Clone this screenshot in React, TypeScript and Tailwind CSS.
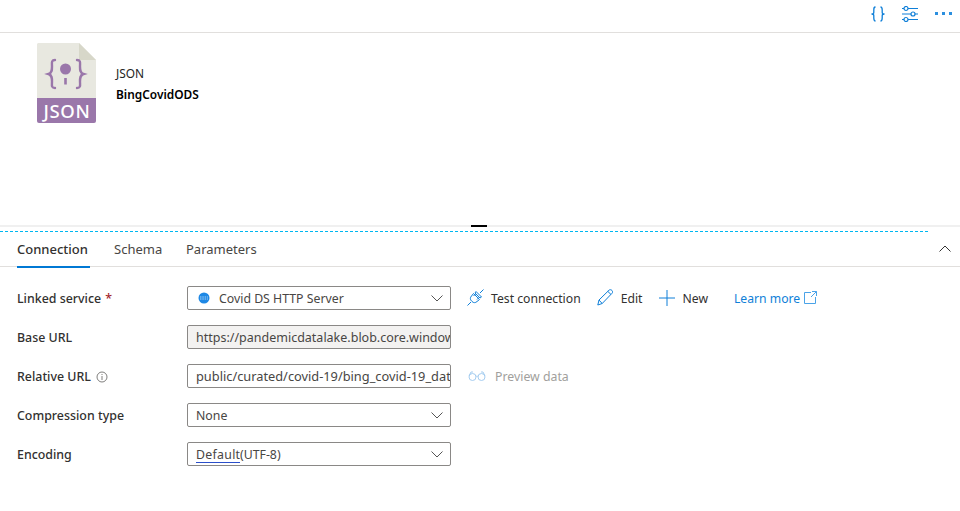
import React from "react";

const Chevron = () => (
  <svg width="12" height="7" viewBox="0 0 12 7" className="absolute right-[7px] top-[8px]" fill="none" stroke="#555" strokeWidth="1">
    <path d="M0.5 0.5 L6 6 L11.5 0.5" />
  </svg>
);

const Select = ({ children }: { children: React.ReactNode }) => (
  <div className="relative w-[264px] h-[24px] border border-[#8a8886] rounded-[2px] pl-[8px] pt-[2px] flex items-center text-[12.3px] text-[#484644] bg-white">
    {children}
    <Chevron />
  </div>
);

const Row = ({ label, children }: { label: React.ReactNode; children: React.ReactNode }) => (
  <div className="flex items-center h-[24px] mb-[15px]">
    <div className="w-[170px] pt-[2px] text-[12.4px] font-medium text-[#323130] flex items-center">{label}</div>
    {children}
  </div>
);

const TextBox = ({ value, disabled, size }: { value: string; disabled?: boolean; size: string }) => (
  <div className={`w-[264px] h-[24px] border border-[#8a8886] rounded-[2px] pl-[8px] pt-[2px] flex items-center text-[#484644] overflow-hidden whitespace-nowrap ${size} ${disabled ? "bg-[#f3f2f1]" : "bg-white"}`}>
    {value}
  </div>
);

export default function App() {
  return (
    <div className="w-[960px] h-[511px] bg-white overflow-hidden font-['Noto_Sans','Open_Sans',sans-serif]">
      {/* top toolbar */}
      <div className="h-[33px] border-b border-[#e1dfdd] flex items-center justify-end pb-[5px] pr-[8px]">
        <svg width="16" height="16" viewBox="0 0 16 16" fill="none" stroke="#0f7fd8" strokeWidth="1.3" className="mr-[15px]">
          <path d="M5.5 1 C3.8 1 3.8 2 3.8 4 V6.5 C3.8 7.5 2.8 8 1.5 8 C2.8 8 3.8 8.5 3.8 9.5 V12 C3.8 14 3.8 15 5.5 15" />
          <path d="M10.5 1 C12.2 1 12.2 2 12.2 4 V6.5 C12.2 7.5 13.2 8 14.5 8 C13.2 8 12.2 8.5 12.2 9.5 V12 C12.2 14 12.2 15 10.5 15" />
        </svg>
        <svg width="17" height="16" viewBox="0 0 17 16" fill="none" stroke="#0f7fd8" strokeWidth="1.2" className="mr-[17px]">
          <path d="M1 2.5 H3 M7 2.5 H17 M1 8 H10 M14 8 H17 M1 13.5 H3 M7 13.5 H17" />
          <circle cx="5" cy="2.5" r="2" />
          <circle cx="12" cy="8" r="2" />
          <circle cx="5" cy="13.5" r="2" />
        </svg>
        <div className="flex gap-[4px] items-center">
          <span className="w-[3px] h-[3px] bg-[#2b8fdf]" />
          <span className="w-[3px] h-[3px] bg-[#2b8fdf]" />
          <span className="w-[3px] h-[3px] bg-[#2b8fdf]" />
        </div>
      </div>

      {/* file panel */}
      <div className="h-[192px] flex items-start pl-[37px] pt-[10px]">
        <svg width="59" height="80" viewBox="0 0 59 80" className="block">
          <path d="M1 0 H42 L59 17 V58 H0 V1 Z" fill="#e8e8e0" />
          <path d="M42 0 L59 17 H42 Z" fill="#d7d7c9" />
          <path d="M0 55 H59 V78 Q59 80 57 80 H2 Q0 80 0 78 Z" fill="#9a77aa" />
          <g fill="none" stroke="#9a77aa" strokeWidth="2.4" strokeLinecap="round">
            <path d="M18 17 C14 17 15 20 15 23.5 C15 27 15 30 11.5 31 C15 32 15 35 15 38.5 C15 42 14 45 18 45" />
            <path d="M40 17 C44 17 43 20 43 23.5 C43 27 43 30 46.5 31 C43 32 43 35 43 38.5 C43 42 44 45 40 45" />
          </g>
          <circle cx="28.5" cy="26" r="5.5" fill="#9a77aa" />
          <rect x="27.2" y="35" width="2.6" height="6.5" fill="#9a77aa" />
          <text x="30" y="75" textAnchor="middle" fill="#fff" fontSize="18.5" fontWeight="500" letterSpacing="0.6" fontFamily="'Noto Sans',sans-serif">JSON</text>
        </svg>
        <div className="ml-[20px] pt-[20px] text-[11.9px] leading-[20px]">
          <div className="text-[#252423]">JSON</div>
          <div className="font-semibold text-black pt-[1px]">BingCovidODS</div>
        </div>
      </div>

      {/* splitter */}
      <div className="relative h-[2px] bg-[#f0f0f0]">
        <div className="absolute left-[471px] top-0 w-[16px] h-[2px] bg-black" />
      </div>
      <div className="h-[4px]" />
      <div className="h-0 w-[928px] border-t border-dashed border-[#00b7f0]" />

      {/* tabs */}
      <div className="relative h-[35px] border-b border-[#e1dfdd] flex pl-[17px] gap-[24px] text-[13px]">
        <div className="relative w-[73px] whitespace-nowrap h-[35px] flex items-center text-[#323130] font-medium">
          Connection
          <div className="absolute left-0 right-0 bottom-[-1px] h-[2px] bg-[#0078d4]" />
        </div>
        <div className="w-[48px] h-[35px] flex items-center text-[#484644]">Schema</div>
        <div className="h-[35px] flex items-center text-[#484644]">Parameters</div>
        <svg width="12" height="7" viewBox="0 0 12 7" fill="none" stroke="#333" strokeWidth="1" className="absolute right-[9px] top-[13px]">
          <path d="M0.5 6.5 L6 1 L11.5 6.5" />
        </svg>
      </div>

      {/* form */}
      <div className="pl-[17px] pt-[19px]">
        <Row label={<>Linked service <span className="text-[#a4262c] ml-[4px]">*</span></>}>
          <Select>
            <svg width="12" height="12" viewBox="0 0 12 12" className="mr-[9px] ml-[2px] mb-[2px]">
              <circle cx="6" cy="6" r="5.5" fill="#1e88e5" />
              <path d="M2 5 H10 M2 7 H10" stroke="#cfe6fa" strokeWidth="0.8" strokeDasharray="1.5 0.8" />
            </svg>
            Covid DS HTTP Server
          </Select>
          <div className="flex items-center text-[12.2px] text-[#323130] ml-[16px]">
            <svg width="17" height="17" viewBox="0 0 17 17" fill="none" stroke="#0f7fd8" strokeWidth="1" className="mr-[7px]">
              <path d="M0.5 16.5 L4 13 M16.5 0.5 L13 4 M8.5 5 L6.5 7 M12 8.5 L10 10.5" />
              <path d="M6.5 4.5 L12.5 10.5 L10 12.5 C8.5 14 6.5 14 5 12.5 L4.5 12 C3 10.5 3 8.5 4.5 7 Z" />
              <path d="M9 2.5 L14.5 8 L13 9 L8 4 Z" />
            </svg>
            <span className="pt-[2px]">Test connection</span>
            <svg width="16" height="17" viewBox="0 0 16 17" fill="none" stroke="#0f7fd8" strokeWidth="1" className="ml-[16px] mr-[8px]">
              <path d="M0.8 16 L2 11 L12 1.2 C12.8 0.5 14 0.5 15 1.5 C15.8 2.4 15.8 3.5 15 4.3 L5.2 14.5 Z M2 11 L5.2 14.5 M10.8 2.4 L14 5.5" />
            </svg>
            <span className="pt-[2px]">Edit</span>
            <svg width="16" height="16" viewBox="0 0 16 16" fill="none" stroke="#0f7fd8" strokeWidth="1" className="ml-[16px] mr-[8px]">
              <path d="M0 8 H16 M8 0 V16" />
            </svg>
            <span className="pt-[2px]">New</span>
            <span className="ml-[26px] pt-[2px] text-[#0f7fd8]">Learn more</span>
            <svg width="13" height="13" viewBox="0 0 13 13" fill="none" stroke="#4aa3e8" strokeWidth="1" className="ml-[4px]">
              <path d="M7 1.5 H0.5 V12.5 H11.5 V6 M8 0.5 H12.5 V5 M12.5 0.5 L7 6" />
            </svg>
          </div>
        </Row>
        <Row label="Base URL">
          <TextBox disabled size="text-[12.5px]" value="https://pandemicdatalake.blob.core.windows.net/" />
        </Row>
        <Row
          label={
            <>
              Relative URL
              <svg width="12" height="12" viewBox="0 0 12 12" fill="none" stroke="#605e5c" strokeWidth="0.8" className="ml-[5px]">
                <circle cx="6" cy="6" r="5" />
                <path d="M6 5 V9 M6 3 V4" />
              </svg>
            </>
          }
        >
          <TextBox size="text-[12.8px]" value="public/curated/covid-19/bing_covid-19_data/latest" />
          <div className="flex items-center ml-[17px] text-[12.3px] text-[#a19f9d]">
            <svg width="18" height="10" viewBox="0 0 18 10" fill="none" stroke="#a5cdf0" strokeWidth="1" className="mr-[9px]">
              <circle cx="4.5" cy="6" r="3.5" />
              <circle cx="13.5" cy="6" r="3.5" />
              <path d="M8 5.5 C8.5 5 9.5 5 10 5.5 M1 5 L3 1 H5 M17 5 L15 1 H13" />
            </svg>
            <span className="pt-[2px]">Preview data</span>
          </div>
        </Row>
        <Row label="Compression type">
          <Select>None</Select>
        </Row>
        <Row label="Encoding">
          <Select>
            <span className="w-[44px] tracking-[0.3px] border-b border-[#2b4fc9] leading-[14px]">Default</span>(UTF-8)
          </Select>
        </Row>
      </div>
    </div>
  );
}
